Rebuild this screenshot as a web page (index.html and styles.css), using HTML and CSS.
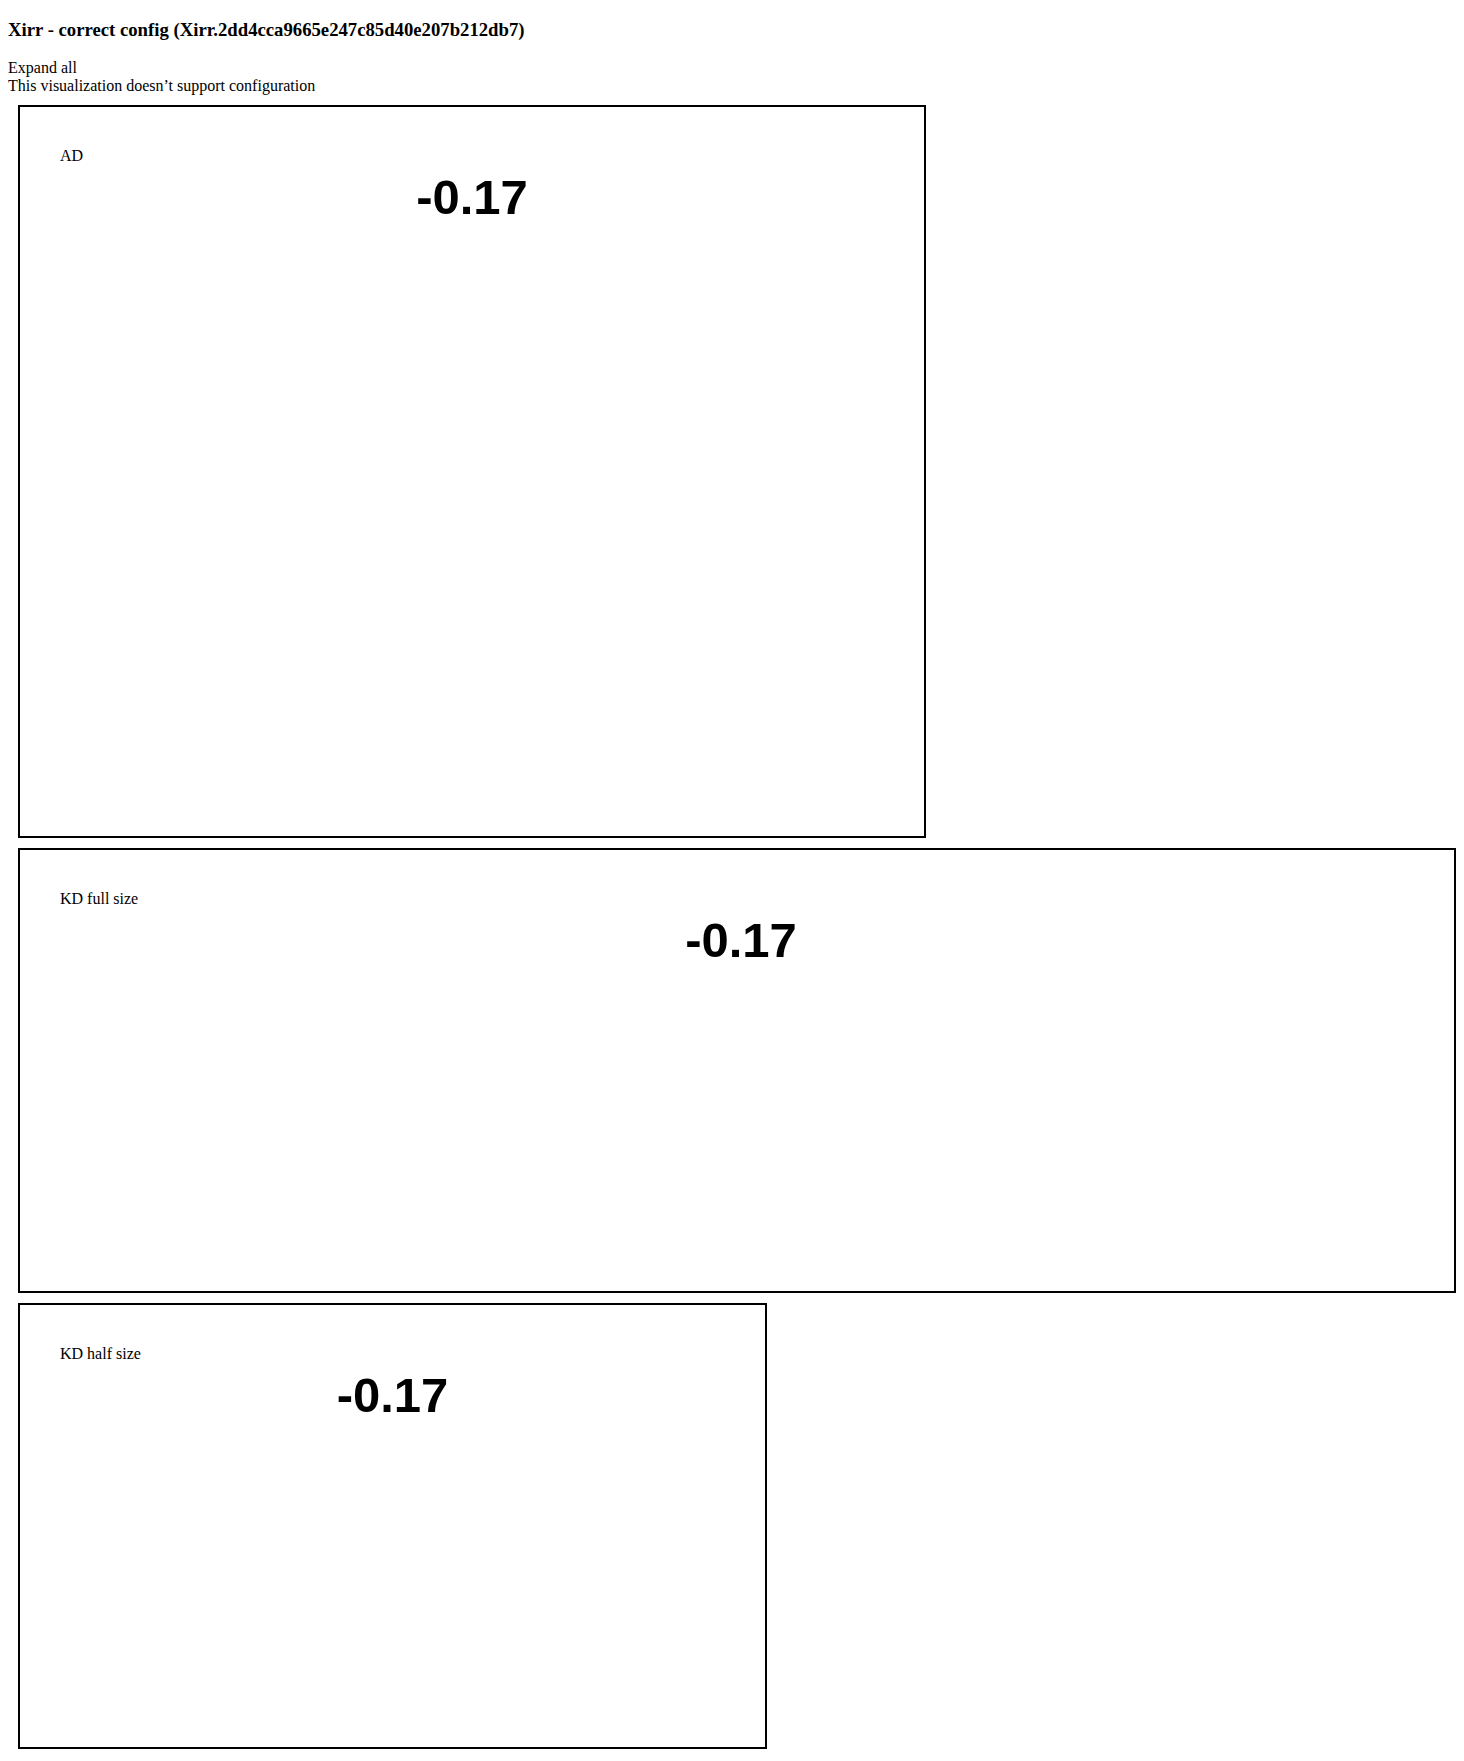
FILE: index.html
```html
<!DOCTYPE html>
<html>
<head>
<meta charset="utf-8">
<link rel="stylesheet" href="styles.css">
</head>
<body>
<h3 class="title">Xirr - correct config (Xirr.2dd4cca9665e247c85d40e207b212db7)</h3>
<div class="meta">Expand all</div>
<div class="meta">This visualization doesn’t support configuration</div>
<div class="card card-ad">
  <div class="label">AD</div>
  <div class="value">-0.17</div>
</div>
<div class="card card-full">
  <div class="label">KD full size</div>
  <div class="value">-0.17</div>
</div>
<div class="card card-half">
  <div class="label">KD half size</div>
  <div class="value">-0.17</div>
</div>
</body>
</html>
```
FILE: styles.css
```css
html {
  background: #ffffff;
  overflow: hidden;
}
body {
  margin: 0 8px;
  padding: 0;
  font-family: "Liberation Serif", "Times New Roman", serif;
  font-size: 16px;
  color: #000;
}
.title {
  font-size: 18.72px;
  font-weight: bold;
  margin: 18.72px 0;
}
.card {
  box-sizing: border-box;
  margin: 10px;
  border: 2px solid #000;
  padding: 40px;
}
.card-ad {
  width: 908px;
  height: 733px;
}
.card-full {
  width: 1438px;
  height: 445px;
  padding-right: 32px;
}
.card-half {
  width: 749px;
  height: 446px;
}
.label {
  font-size: 16px;
}
.value {
  margin-top: 4px;
  text-align: center;
  font-family: "Liberation Sans", Arial, sans-serif;
  font-weight: bold;
  font-size: 49px;
}
```
